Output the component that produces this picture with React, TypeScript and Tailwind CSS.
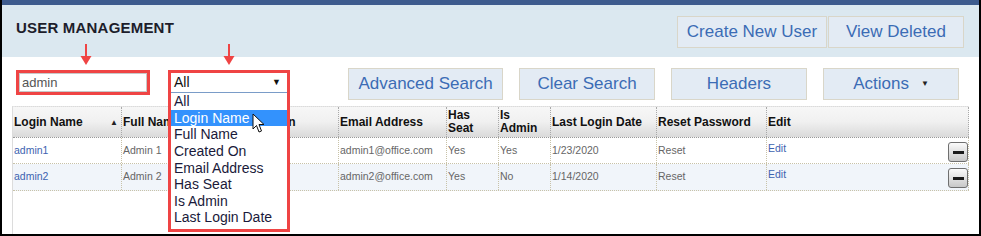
import React from "react";

const cols = [
  { label: "Login Name", w: 109 },
  { label: "Full Name", w: 108 },
  { label: "Created On", w: 109 },
  { label: "Email Address", w: 108 },
  { label: "Has Seat", w: 52 },
  { label: "Is Admin", w: 52 },
  { label: "Last Login Date", w: 106 },
  { label: "Reset Password", w: 110 },
  { label: "Edit", w: 202 },
];

const rows = [
  ["admin1", "Admin 1", "", "admin1@office.com", "Yes", "Yes", "1/23/2020", "Reset"],
  ["admin2", "Admin 2", "", "admin2@office.com", "Yes", "No", "1/14/2020", "Reset"],
];

const options = ["All", "Login Name", "Full Name", "Created On", "Email Address", "Has Seat", "Is Admin", "Last Login Date"];

function Btn({ children, className = "" }: { children: React.ReactNode; className?: string }) {
  return (
    <div
      className={
        "flex items-center justify-center border border-[#d9d6c9] bg-[#e3ebf4] text-[17px] text-[#3b6cb5] " +
        className
      }
    >
      {children}
    </div>
  );
}

function Arrow({ left }: { left: number }) {
  return (
    <svg className="absolute" style={{ left, top: 44 }} width="12" height="22" viewBox="0 0 12 22">
      <line x1="6" y1="0" x2="6" y2="14" stroke="#ef4444" strokeWidth="2" />
      <polygon points="0.5,12 11.5,12 6,21" fill="#ef4444" />
    </svg>
  );
}

function MinusBtn() {
  return (
    <div className="flex h-[20px] w-[20px] items-center justify-center rounded-[3px] border border-[#6f6f6f] bg-gradient-to-b from-[#fbfbfb] to-[#c8c8c8]">
      <div className="h-[3px] w-[11px] bg-[#1a1a1a]" />
    </div>
  );
}

export default function App() {
  return (
    <div
      className="relative h-[236px] w-[981px] overflow-hidden border-x-2 border-b-2 border-black bg-white"
      style={{ fontFamily: '"Liberation Sans", Arial, sans-serif' }}
    >
      <div className="h-[5px] bg-[#3d5b8e]" />
      {/* header */}
      <div className="flex h-[52px] items-start justify-between bg-[#dbe8f0] pr-[15px]">
        <div className="pl-[14px] pt-[12px] text-[15px] font-bold tracking-[0.2px] text-[#1d1d2b]">USER MANAGEMENT</div>
        <div className="mt-[11px] flex gap-[1px]">
          <Btn className="h-[32px] w-[150px]">Create New User</Btn>
          <Btn className="h-[32px] w-[136px]">View Deleted</Btn>
        </div>
      </div>
      {/* controls */}
      <div className="flex h-[49px] items-start pl-[14px]">
        <div className="mt-[13px] h-[25px] w-[134px] border-[3px] border-[#ef4444] bg-white">
          <div className="flex h-full items-center border border-[#c8c8c8] pl-[2px] text-[13px] text-[#555]">admin</div>
        </div>
        <div className="ml-[198px] mt-[11px] flex gap-[16px]">
          <Btn className="h-[32px] w-[155px]">Advanced Search</Btn>
          <Btn className="h-[32px] w-[136px]">Clear Search</Btn>
          <Btn className="h-[32px] w-[136px]">Headers</Btn>
          <Btn className="h-[32px] w-[136px]">
            <span>Actions</span>
            <span className="ml-[12px] text-[8px] text-[#222]">▼</span>
          </Btn>
        </div>
      </div>
      {/* table */}
      <div className="ml-[10px] flex h-[128px] w-[957px] flex-col border-l border-[#dcdcdc]">
        <div className="flex h-[32px] border-t border-b border-t-[#e6e6e6] border-b-[#999] border-dotted bg-gradient-to-b from-[#f7f7f7] via-[#f0f0f0] to-[#dadada]">
          {cols.map((c, i) => (
            <div
              key={c.label}
              style={{ width: c.w }}
              className="flex items-center border-r border-dotted border-[#a9a9a9] px-[1px] text-[12px] font-bold leading-[13px] text-[#111]"
            >
              {c.label === "Has Seat" ? (
                <span>Has<br />Seat</span>
              ) : c.label === "Is Admin" ? (
                <span>Is<br />Admin</span>
              ) : (
                <span className="flex-1">{c.label}</span>
              )}
              {i === 0 && <span className="mr-[2px] text-[8px] text-[#222]">▲</span>}
            </div>
          ))}
        </div>
        {rows.map((r, ri) => (
          <div
            key={ri}
            className={"flex border-b border-dotted border-[#c8c2a8] " + (ri === 0 ? "h-[26px] bg-white" : "h-[27px] bg-[#f1f5fa]")}
          >
            {cols.map((c, i) => (
              <div
                key={c.label}
                style={{ width: c.w }}
                className="flex items-center border-r border-dotted border-[#c8c2a8] px-[1px] text-[10.5px] text-[#666]"
              >
                {i === 0 ? (
                  <span className="text-[#3d63b0]">{r[0]}</span>
                ) : i === 8 ? (
                  <div className="flex h-full w-full items-start justify-between pt-[3px]">
                    <span className="text-[#3d63b0]">Edit</span>
                    <div className="mr-[-1px] mt-[1px]">
                      <MinusBtn />
                    </div>
                  </div>
                ) : (
                  <span>{r[i]}</span>
                )}
              </div>
            ))}
          </div>
        ))}
      </div>

      {/* annotation arrows */}
      <Arrow left={78} />
      <Arrow left={221} />

      {/* open select overlay */}
      <div className="absolute left-[166px] top-[70px] h-[162px] w-[122px] border-[3px] border-[#ef4444] bg-white">
        <div className="flex h-[20px] items-center justify-between border-b border-[#7a9cc8] pl-[3px] pr-[6px] text-[14px] text-[#111]">
          <span>All</span>
          <span className="text-[9px]">▼</span>
        </div>
        <div className="flex flex-col">
          {options.map((o, i) => (
            <div
              key={o}
              className={
                "flex h-[16.6px] items-center pl-[3px] text-[14px] leading-[16px] " +
                (i === 1 ? "bg-[#3392fd] text-white" : "text-[#1a1a3a]")
              }
            >
              {o}
            </div>
          ))}
        </div>
      </div>

      {/* mouse cursor */}
      <svg className="absolute" style={{ left: 250, top: 113 }} width="14" height="21" viewBox="0 0 14 21">
        <path d="M1 1 L1 16 L4.5 12.5 L7 19 L9.5 18 L7 11.5 L12 11.5 Z" fill="white" stroke="#111" strokeWidth="1" strokeLinejoin="round" />
      </svg>
    </div>
  );
}
